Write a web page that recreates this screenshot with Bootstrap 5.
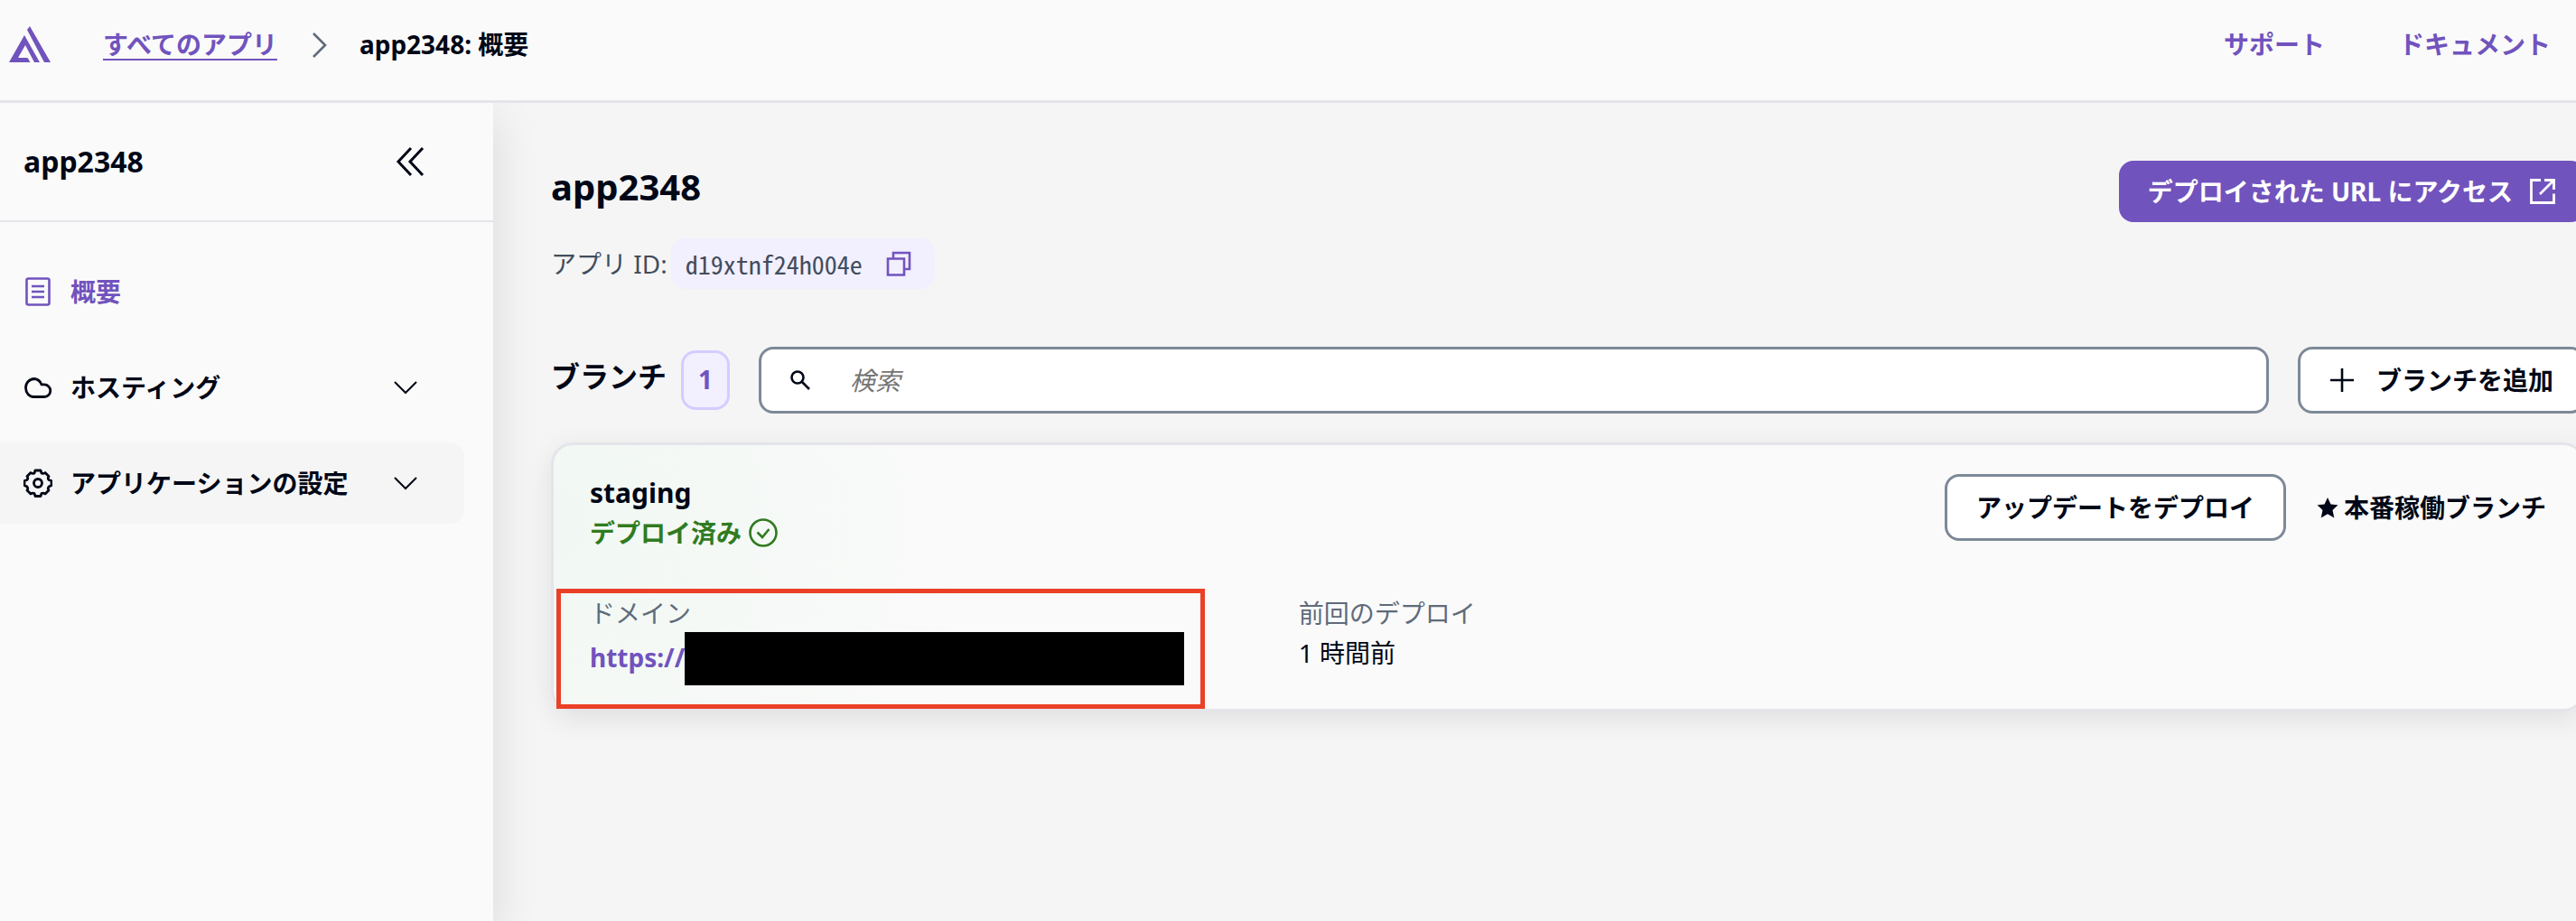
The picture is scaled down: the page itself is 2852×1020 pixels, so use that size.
<!DOCTYPE html>
<html lang="ja">
<head>
<meta charset="utf-8">
<meta name="viewport" content="width=device-width, initial-scale=1">
<title>app2348: 概要</title>
<link href="https://cdn.jsdelivr.net/npm/bootstrap@5.3.0/dist/css/bootstrap.min.css" rel="stylesheet">
<style>
:root{--ink:#000716;--brand:#7153bd;--muted:#5f6b7a;--line:#e4e4ea;--edge:#7d8998}
body{font-family:"Noto Sans","Noto Sans CJK JP",sans-serif;font-size:28px;line-height:40px;color:var(--ink);background:#f5f5f5;overflow-x:hidden}
svg{flex:none;fill:none;stroke:currentColor}
.solid-icon{fill:currentColor;stroke:none}
a{color:var(--brand)}
.topbar{background:#fafafa;border-bottom:3px solid var(--line);padding:27px 28px 39px 8px;line-height:45px}
.top-links{gap:82px}
.crumb-link{text-decoration-thickness:2px;text-underline-offset:5px;margin-left:56px}
.crumb-sep{color:var(--muted);margin:0 36px 0 38px}
.shell{min-height:calc(100vh - 114px)}
.side{width:546px;flex:none;background:#fafafa;box-shadow:0 16px 48px rgba(0,0,0,.12);clip-path:inset(0 -60px 0 0);position:relative}
.side-head{height:132px;padding:0 76px 0 26px;border-bottom:2px solid var(--line)}
.name-sm{font-size:32px;margin:0}
.side-list{padding-top:32px;gap:16px;padding-right:32px}
.side-item{height:90px;padding:0 52px 0 26px;gap:20px;border-radius:0 16px 16px 0;color:var(--ink);border:0;background:none;text-align:left}
.side-item.active-page{color:var(--brand)}
.side-item.hovered{background:#f5f5f5}
.stage{padding:66px 0 0 64px;margin-right:-10px;min-width:0}
.name-lg{font-size:40px;line-height:54px;margin:0 0 30px}
.app-id{color:#414d5c}
.id-pill{background:#f2effe;border-radius:16px;height:56px;padding:0 26px 0 16px;gap:26px;margin-left:4px}
.id-text{font-family:"Noto Sans Mono CJK JP","DejaVu Sans Mono",monospace}
.bare-btn{border:0;background:none;padding:0;color:var(--brand);display:flex}
.btn-big{font-size:28px;line-height:40px;font-weight:700;border-radius:16px;padding:14px 32px;border:3px solid var(--edge);background:#fff;color:var(--ink);white-space:nowrap}
.btn-add{gap:24px}
.btn-main{background:var(--brand);color:#fff;border:0;gap:18px;margin-top:-2px}
.toolbar-row{margin-top:64px;gap:32px}
.branch-count{gap:16px}
.section-name{font-size:32px;margin:0;padding-bottom:8px}
.count-box{width:54px;height:66px;border:3px solid #d5ccff;border-radius:16px;background:#f2effe;color:var(--brand);font-size:28px;padding-bottom:2px}
.search-box{height:74px;border:3px solid var(--edge);border-radius:16px;background:#fff;padding:0 30px;gap:42px}
.search-box input{border:0;outline:0;font-size:28px;background:none;color:var(--ink);width:100%;padding:0}
.search-box input::placeholder{color:#757575;font-style:italic;opacity:1}
.branch{margin-top:32px;border:3px solid var(--line);border-radius:24px;padding:32px 40px 22px 40px;background:radial-gradient(circle at 0 30%,#f1f8f3 0,#fafafa 480px);box-shadow:0 8px 32px rgba(0,0,0,.09)}
.branch-name{font-size:30px;line-height:42px;margin:0}
.done{color:#307b1f;line-height:46px;gap:8px}
.branch-actions{gap:32px}
.prod-flag{gap:4px}
.facts{display:grid;grid-template-columns:4fr 7fr;margin-top:44px}
.fact-key{color:var(--muted);font-weight:400}
.fact{line-height:44px;margin-left:-3px}
.marked{margin:-5px 107px -22px -37px;padding:2px 18px 21px 32px;border:5px solid #eb4027}
.masked{background:#000;height:59px}
.masked-row{padding-top:1px}
.masked-row a{padding-bottom:4px}
</style>
</head>
<body>
<header class="topbar d-flex align-items-center justify-content-between">
  <nav class="d-flex align-items-center fw-bold" aria-label="breadcrumb">
    <a href="#" aria-label="ホーム" class="d-flex"><svg class="solid-icon" width="50" height="45" viewBox="0 0 50 45"><path d="M19 12 2 42h23.500l-3-5H12l8-14 10 19h6zM22 6l3-4 23 40h-7z"/></svg></a>
    <a href="#" class="crumb-link">すべてのアプリ</a>
    <svg class="crumb-sep" width="17" height="28" viewBox="0 0 17 28" stroke-width="2.6"><path d="m2 1 13 13L2 27"/></svg>
    <span>app2348: 概要</span>
  </nav>
  <div class="top-links d-flex fw-bold">
    <a href="#" class="text-decoration-none">サポート</a>
    <a href="#" class="text-decoration-none">ドキュメント</a>
  </div>
</header>
<div class="shell d-flex">
  <aside class="side">
    <div class="side-head d-flex align-items-center justify-content-between">
      <h2 class="name-sm fw-bold">app2348</h2>
      <button class="bare-btn text-reset" aria-label="折りたたむ"><svg width="32" height="34" viewBox="0 0 32 34" stroke-width="3"><path d="M17 2 3 17l14 15M30 2 16 17l14 15"/></svg></button>
    </div>
    <nav class="side-list d-flex flex-column fw-bold">
      <a href="#" class="side-item active-page d-flex align-items-center text-decoration-none"><svg width="32" height="32" viewBox="0 0 32 32" stroke-width="2.6"><rect x="3.500" y="1.500" width="25" height="29" rx="2"/><path d="M9 10h14M9 16h14M9 22h14"/></svg><span>概要</span></a>
      <button class="side-item d-flex align-items-center fw-bold"><svg width="32" height="32" viewBox="0 0 32 32" stroke-width="2.8"><path d="M11 26.500h12a6.800 6.800 0 0 0 0-13.600h-3A9.700 9.700 0 0 0 12 6.500a9.700 9.700 0 0 0-9.500 10c0 5.500 4 10 8.500 10z"/></svg><span>ホスティング</span><svg class="ms-auto" width="26" height="15" viewBox="0 0 26 15" stroke-width="2"><path d="m1 1 12 12L25 1"/></svg></button>
      <button class="side-item hovered d-flex align-items-center fw-bold"><svg width="32" height="32" viewBox="0 0 32 32" stroke-width="2.8" stroke-linejoin="round"><circle cx="16" cy="16" r="4.500"/><path d="M13 2h6l1 3q2 1 4-.5l4 4q-1.500 2 0 4L31 13.500v5L28 20q-1.500 2 0 4l-4 4q-2-1.500-4-.5l-1 3h-6l-1-3q-2-1-4 .5l-4-4q1.500-2 0-4l-3-1.500v-5L4 12.500q1.500-2 0-4l4-4q2 1.500 4 .5z"/></svg><span>アプリケーションの設定</span><svg class="ms-auto" width="26" height="15" viewBox="0 0 26 15" stroke-width="2"><path d="m1 1 12 12L25 1"/></svg></button>
    </nav>
  </aside>
  <main class="stage flex-grow-1">
    <div class="d-flex justify-content-between align-items-start">
      <div>
        <h1 class="name-lg fw-bold">app2348</h1>
        <div class="app-id d-flex align-items-center">アプリ ID:
          <span class="id-pill d-inline-flex align-items-center"><span class="id-text">d19xtnf24h004e</span>
          <button class="bare-btn" aria-label="コピー"><svg width="28" height="28" viewBox="0 0 28 28" stroke-width="2.6"><path d="M2 8.500h18v18H2zM8 8V2h18v18h-5"/></svg></button></span>
        </div>
      </div>
      <a href="#" class="btn btn-big btn-main d-flex align-items-center"><span>デプロイされた URL にアクセス</span><svg width="30" height="30" viewBox="0 0 30 30" stroke-width="2.8"><path d="M13 2.500H2.500v25h25V17.500M17 2.500h10.500V13M27 3 12 18"/></svg></a>
    </div>
    <div class="toolbar-row d-flex align-items-center">
      <div class="branch-count d-flex align-items-center"><h2 class="section-name fw-bold">ブランチ</h2><span class="count-box d-flex align-items-center justify-content-center fw-bold">1</span></div>
      <label class="search-box flex-grow-1 d-flex align-items-center"><svg width="26" height="26" viewBox="0 0 26 26" stroke-width="2.600"><circle cx="10" cy="10" r="6.500"/><path d="m15 15 8 8"/></svg><input type="search" placeholder="検索" aria-label="検索"></label>
      <button class="btn btn-big btn-add d-flex align-items-center"><svg width="28" height="28" viewBox="0 0 28 28" stroke-width="2.6"><path d="M14 1v26M1 14h26"/></svg><span>ブランチを追加</span></button>
    </div>
    <section class="branch">
      <div class="d-flex justify-content-between align-items-start">
        <div>
          <h3 class="branch-name fw-bold">staging</h3>
          <div class="done fw-bold d-flex align-items-center">デプロイ済み<svg width="32" height="32" viewBox="0 0 32 32" stroke-width="2.6"><circle cx="16" cy="16" r="14.500"/><path d="m9.500 15.500 5.500 5.500 7.500-9"/></svg></div>
        </div>
        <div class="branch-actions d-flex align-items-center fw-bold">
          <button class="btn btn-big">アップデートをデプロイ</button>
          <span class="prod-flag d-flex align-items-center"><svg class="solid-icon" width="28" height="28" viewBox="0 0 28 28"><path d="m14 3 3.500 7.500 8 .8-6 5.700 1.800 8.500L14 21.300 6.700 25.500 8.500 17l-6-5.700 8-.8z"/></svg>本番稼働ブランチ</span>
        </div>
      </div>
      <div class="facts">
        <div class="marked">
          <div class="fact-key">ドメイン</div>
          <div class="masked-row d-flex align-items-center"><a href="#" class="fw-bold text-decoration-none">https://</a><span class="masked flex-grow-1"></span></div>
        </div>
        <div class="fact">
          <div class="fact-key">前回のデプロイ</div>
          <div>1 時間前</div>
        </div>
      </div>
    </section>
  </main>
</div>
<script src="https://cdn.jsdelivr.net/npm/bootstrap@5.3.0/dist/js/bootstrap.bundle.min.js"></script>
</body>
</html>
